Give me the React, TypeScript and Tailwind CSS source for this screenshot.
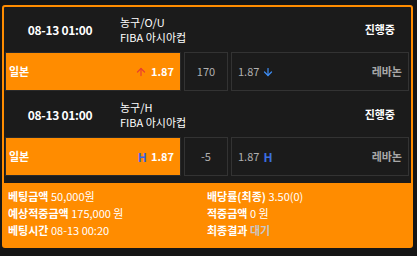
import { ArrowUp, ArrowDown } from 'lucide-react'

type Match = {
  time: string
  sport: string
  league: string
  home: string
  away: string
  homeOdds: string
  awayOdds: string
  line: string
  kind: 'ou' | 'h'
}

const matches: Match[] = [
  { time: '08-13 01:00', sport: '농구/O/U', league: 'FIBA 아시아컵', home: '일본', away: '레바논', homeOdds: '1.87', awayOdds: '1.87', line: '170', kind: 'ou' },
  { time: '08-13 01:00', sport: '농구/H', league: 'FIBA 아시아컵', home: '일본', away: '레바논', homeOdds: '1.87', awayOdds: '1.87', line: '-5', kind: 'h' },
]

function MatchBlock({ m }: { m: Match }) {
  return (
    <div className="flex flex-col">
      <div className="flex items-center h-[45px]">
        <div className="w-[110px] text-center font-bold text-white text-[12px] tracking-tight">{m.time}</div>
        <div className="flex flex-col pl-[5px] text-white text-[11px] leading-[15px]">
          <span>{m.sport}</span>
          <span>{m.league}</span>
        </div>
        <div className="ml-auto pr-[14px] font-bold text-white text-[11px]">진행중</div>
      </div>
      <div className="flex h-[39px] gap-[3px]">
        <div className="w-[176px] bg-[#ff8c00] flex items-center pl-[3px] pr-[6px] border border-[#2a2a2a]">
          <span className="font-bold text-white text-[11px]">{m.home}</span>
          <span className="ml-auto flex items-center gap-[4px]">
            {m.kind === 'ou' ? (
              <ArrowUp className="w-[12px] h-[12px] text-[#e8412f]" strokeWidth={2.5} />
            ) : (
              <span className="font-bold text-[#3b62e0] text-[12px]">H</span>
            )}
            <span className="font-bold text-white text-[11px]">{m.homeOdds}</span>
          </span>
        </div>
        <div className="w-[44px] border border-[#333] flex items-center justify-center text-[#b0b0b0] text-[11px]">
          {m.line}
        </div>
        <div className="flex-1 border border-[#333] flex items-center pl-[6px] pr-[6px]">
          <span className="flex items-center gap-[3px] text-[#b0b0b0] text-[11px]">
            {m.awayOdds}
            {m.kind === 'ou' ? (
              <ArrowDown className="w-[12px] h-[12px] text-[#3d8bf0]" strokeWidth={2.5} />
            ) : (
              <span className="font-bold text-[#3b6fe0] text-[12px] ml-[1px]">H</span>
            )}
          </span>
          <span className="ml-auto font-bold text-[#a8a8a8] text-[11px]">{m.away}</span>
        </div>
      </div>
    </div>
  )
}

export default function App() {
  return (
    <div
      className="w-[417px] h-[256px] bg-[#151515] pt-[5px] pl-[2px]"
      style={{ fontFamily: '"Noto Sans CJK KR", "Noto Sans", sans-serif' }}
    >
      <div className="w-[411px] h-[243px] border-2 border-[#ff8c00] rounded-[3px] bg-[#1b1b1b] flex flex-col">
        <div className="flex flex-col gap-[1px] pl-[1px] pr-[2px]">
          {matches.map((m, i) => (
            <MatchBlock key={i} m={m} />
          ))}
        </div>
        <div className="mt-auto h-[63px] bg-[#ff8c00] grid grid-cols-[199px_1fr] pl-[4px] pt-[5px] text-[11px] leading-[17px] text-white">
          <div className="flex flex-col">
            <div><span className="font-bold">베팅금액</span> 50,000원</div>
            <div><span className="font-bold">예상적중금액</span> 175,000 원</div>
            <div><span className="font-bold">베팅시간</span> 08-13 00:20</div>
          </div>
          <div className="flex flex-col">
            <div><span className="font-bold">배당률(최종)</span> 3.50(0)</div>
            <div><span className="font-bold">적중금액</span> 0 원</div>
            <div><span className="font-bold">최종결과</span> <span className="font-bold text-[#c8c8c8]">대기</span></div>
          </div>
        </div>
      </div>
    </div>
  )
}
